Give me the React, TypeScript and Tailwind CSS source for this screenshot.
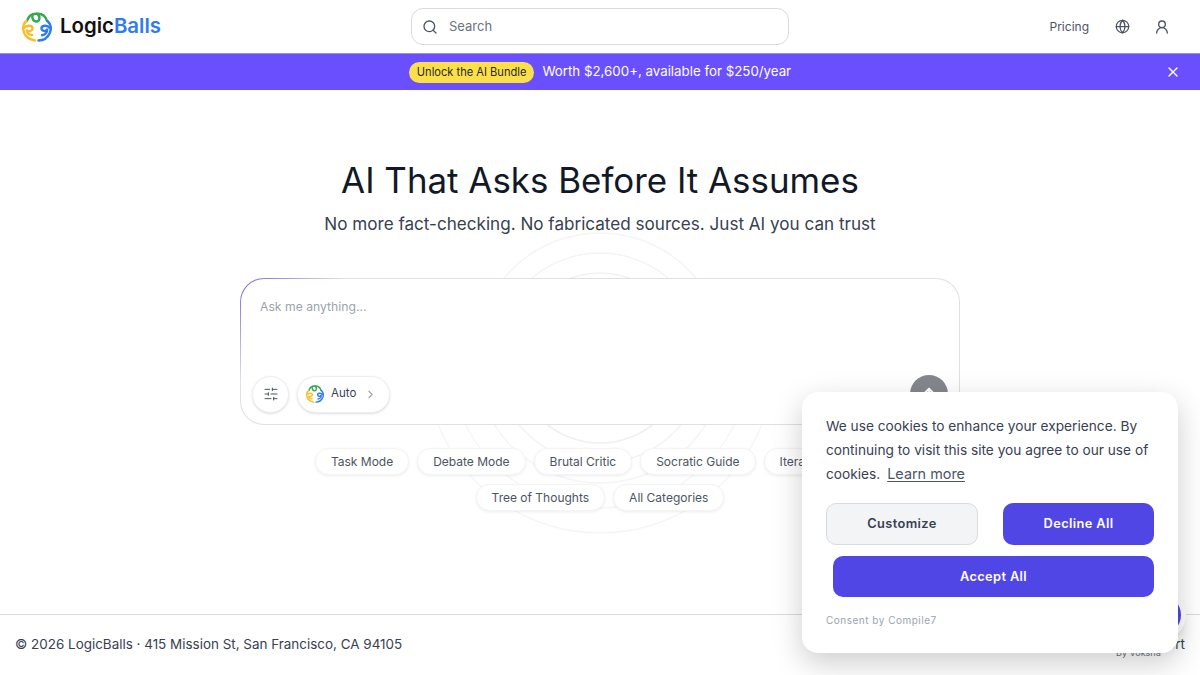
import { ArrowUp, ChevronRight, Globe, Search, SlidersHorizontal, UserRound, X } from 'lucide-react'

const MODES = [
  ['Task Mode', 'Debate Mode', 'Brutal Critic', 'Socratic Guide', 'Iterative Mode'],
  ['Tree of Thoughts', 'All Categories'],
]

function Logo({ size }: { size: number }) {
  return (
    <svg width={size} height={size} viewBox="0 0 30 30" fill="none" strokeWidth="2.4" strokeLinecap="round">
      <g stroke="#34a853">
        <path d="M5 9C6.5 4 10.5 1.5 15 1.8C19.5 1.5 23.5 4 25 9" />
        <path d="M10.5 3C9.5 7 12 10 15 9.5C18 9 18.5 4 15 1.8" />
      </g>
      <g stroke="#fbbc2c">
        <path d="M4.5 9C1 12 .5 16 2 20.5C3.5 25 8 27.5 13 28.5" />
        <path d="M2 16C5 12.5 10.8 13.5 10.5 16.5C10.2 19.5 5 20.5 4.5 17.5C4.5 21 7 23 10 23" />
      </g>
      <g stroke="#2f7bf0">
        <path d="M25.5 9C29 12 29.5 16.5 27.8 21C25.8 25.5 21.5 28.5 16.5 28.5" />
        <path d="M28 16C25 12.5 19.2 13.5 19.5 16.5C19.8 19.5 25 20 25.3 16.5C25.5 20.5 23 23 20 23.2" />
      </g>
    </svg>
  )
}

function Rings() {
  return (
    <svg
      className="absolute left-1/2 top-[110px] -translate-x-1/2"
      width="420"
      height="420"
      viewBox="0 0 420 420"
      fill="none"
      strokeWidth="1.5"
    >
      <defs>
        <linearGradient id="ringFade" gradientUnits="userSpaceOnUse" x1="0" y1="60" x2="0" y2="220">
          <stop offset="0" stopColor="#ffffff" />
          <stop offset="1" stopColor="#f6f6f7" />
        </linearGradient>
      </defs>
      <circle cx="210" cy="158" r="85" stroke="#f0f0f2" />
      <circle cx="210" cy="158" r="105" stroke="#f3f3f5" />
      <circle cx="210" cy="158" r="125" stroke="#f5f5f6" />
      <circle cx="210" cy="158" r="150" stroke="url(#ringFade)" />
      <circle cx="210" cy="158" r="175" stroke="url(#ringFade)" />
    </svg>
  )
}

export default function App() {
  return (
    <div className="relative flex h-[675px] w-[1200px] flex-col overflow-hidden bg-white font-['Inter',sans-serif] text-[#1f2937]">
      <header className="flex h-[53px] items-center pl-[22px] pr-[30px]">
        <div className="flex w-[389px] items-center gap-2">
          <Logo size={30} />
          <span className="text-[20.4px] font-semibold leading-none text-[#111]">
            Logic<span className="text-[#2f7bf0]">Balls</span>
          </span>
        </div>
        <div className="flex h-[37px] w-[378px] items-center gap-[11px] rounded-xl border border-[#d9dbe0] px-[10px]">
          <Search size={16} className="text-[#4b5563]" />
          <span className="text-[13px] text-[#6b7280]">Search</span>
        </div>
        <div className="flex w-[381px] items-center justify-end">
          <span className="text-[12px] text-[#4b5563]">Pricing</span>
          <Globe size={15} className="ml-[26px] text-[#4b5563]" />
          <UserRound size={16} className="ml-[24px] text-[#4b5563]" />
        </div>
      </header>

      <div className="flex h-[37px] items-center justify-center border-t border-[#9b8ce8] bg-[#6a4fff]">
        <span className="rounded-full bg-[#fde047] px-2 py-[3px] text-[11.1px] leading-[15px] text-[#1f2937]">
          Unlock the AI Bundle
        </span>
        <span className="ml-2 text-[13.3px] text-white">Worth $2,600+, available for $250/year</span>
        <X size={16} className="absolute right-[19px] text-white" />
      </div>

      <main className="relative flex flex-1 flex-col items-center pt-[69px]">
        <Rings />
        <h1 className="relative text-[34.9px] font-normal leading-[42px] text-[#111827]">
          AI That Asks Before It Assumes
        </h1>
        <p className="relative mt-[11px] text-[17.1px] leading-[24px] text-[#374151]">
          No more fact-checking. No fabricated sources. Just AI you can trust
        </p>

        <div className="relative mt-[42px] w-[720px] rounded-[24px] bg-[linear-gradient(135deg,#7b5fd9_0%,#dfe0e4_12%)] p-px">
          <div className="flex h-[145px] flex-col justify-between rounded-[23px] bg-white pb-[11px] pl-[11px] pr-[11px] pt-[20px]">
            <span className="pl-[8px] text-[12.2px] leading-4 text-[#9ca3af]">Ask me anything...</span>
            <div className="flex items-center justify-between">
              <div className="flex items-center gap-[8px]">
                <button className="flex h-[37px] w-[37px] items-center justify-center rounded-full border border-[#eceef1] bg-white text-[#4b5563] shadow-sm">
                  <SlidersHorizontal size={16} strokeWidth={1.5} />
                </button>
                <button className="flex h-[37px] items-center rounded-full border border-[#eceef1] bg-white pl-[8px] pr-[12px] shadow-sm">
                  <Logo size={18} />
                  <span className="ml-[7px] text-[11.5px] text-[#374151]">Auto</span>
                  <ChevronRight size={13} className="ml-[8px] text-[#9ca3af]" />
                </button>
              </div>
              <button className="flex h-[38px] w-[38px] items-center justify-center rounded-full bg-[#85878f] text-white">
                <ArrowUp size={18} strokeWidth={2.5} />
              </button>
            </div>
          </div>
        </div>

        <div className="relative mt-[23px] flex flex-col items-center gap-[9px]">
          {MODES.map((row, i) => (
            <div key={i} className="flex gap-[8px]">
              {row.map(m => (
                <span
                  key={m}
                  className={`flex h-[27px] items-center rounded-full border border-[#f3f4f6] bg-white pl-[15px] text-[12px] text-[#4b5563] shadow-[0_1px_3px_rgba(0,0,0,0.07)] ${
                    m === 'Iterative Mode' ? 'pr-[23px]' : 'pr-[15px]'
                  }`}
                >
                  {m}
                </span>
              ))}
            </div>
          ))}
        </div>
      </main>

      <footer className="flex h-[61px] items-center justify-between border-t border-[#d9dbe0] pb-[1px] pl-[15px] pr-[15px]">
        <span className="text-[13.45px] text-[#374151]">
          © 2026 LogicBalls · 415 Mission St, San Francisco, CA 94105
        </span>
        <span className="text-[13.45px] text-[#374151]">Support</span>
      </footer>

      {/* chat launcher sitting behind the consent card */}
      <div className="absolute left-[1136px] top-[590px] flex h-[50px] w-[50px] items-center justify-center rounded-full bg-white shadow-lg">
        <div className="h-[40px] w-[40px] rounded-full bg-[#4f46e5]" />
      </div>
      <span className="absolute left-[1116px] top-[647px] text-[9px] leading-[11px] text-[#6b7280]">By Voksha</span>

      <div className="absolute left-[802px] top-[392px] h-[261px] w-[376px] rounded-2xl bg-white px-[24px] pt-[22px] shadow-[0_10px_30px_rgba(0,0,0,0.2)]">
        <p className="text-[13.7px] leading-[24px] text-[#374151]">
          We use cookies to enhance your experience. By continuing to visit this site you agree to our use of cookies.
          <span className="ml-[7px] text-[14.4px] text-[#4b5563] underline underline-offset-2">Learn more</span>
        </p>
        <div className="mt-[17px] flex justify-between">
          <button className="h-[42px] w-[152px] rounded-[10px] border border-[#d9dbe0] bg-[#f3f4f6] text-[12.8px] font-semibold tracking-[0.03em] text-[#374151]">
            Customize
          </button>
          <button className="h-[42px] w-[151px] rounded-[10px] bg-[#4f46e5] text-[12.8px] font-semibold tracking-[0.03em] text-white">
            Decline All
          </button>
        </div>
        <button className="ml-[7px] mt-[11px] h-[41px] w-[321px] rounded-[10px] bg-[#4f46e5] text-[12.8px] font-semibold tracking-[0.03em] text-white">
          Accept All
        </button>
        <p className="mt-[16px] text-[10px] leading-[14px] tracking-[0.05em] text-[#9ca3af]">Consent by Compile7</p>
      </div>
    </div>
  )
}
